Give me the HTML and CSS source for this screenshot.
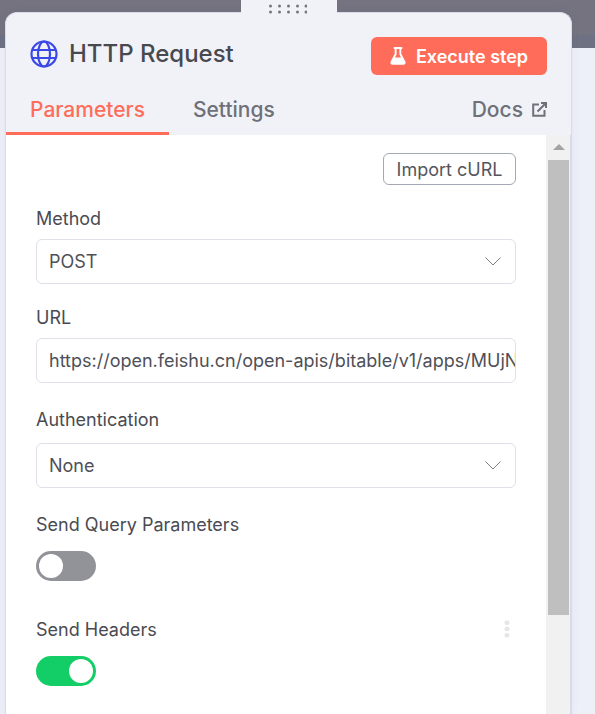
FILE: index.html
```html
<!DOCTYPE html>
<html lang="en">
<head>
    <meta charset="UTF-8">
    <meta name="viewport" content="width=device-width, initial-scale=1.0">
    <title>HTTP Request</title>
    <link rel="stylesheet" href="styles.css">
</head>
<body>
    <div class="wrapper">
        <div class="drag-handle">
            <svg width="38" height="10" viewBox="0 0 38 10" fill="#74757f">
                <circle cx="1.5" cy="2" r="1.5"/><circle cx="10.5" cy="2" r="1.5"/><circle cx="19.5" cy="2" r="1.5"/><circle cx="28.5" cy="2" r="1.5"/><circle cx="37" cy="2" r="1.5"/>
                <circle cx="1.5" cy="8" r="1.5"/><circle cx="10.5" cy="8" r="1.5"/><circle cx="19.5" cy="8" r="1.5"/><circle cx="28.5" cy="8" r="1.5"/><circle cx="37" cy="8" r="1.5"/>
            </svg>
        </div>
        <div class="panel">
            <div class="panel-header">
                <div class="node-title">
                    <svg class="globe" width="28" height="28" viewBox="0 0 28 28" fill="none" stroke="#3a48e6" stroke-width="2.2">
                        <circle cx="14" cy="14" r="12.5"/>
                        <ellipse cx="14" cy="14" rx="6" ry="12.5"/>
                        <path d="M2.5 10h23M2.5 18h23"/>
                    </svg>
                    <span>HTTP Request</span>
                </div>
                <button class="execute-btn">
                    <svg width="16" height="18" viewBox="0 0 17 19" fill="#fff">
                        <path d="M4 0h9v2h-1v5.2l4.4 8.3c.7 1.5-.3 3.2-2 3.2H2.6c-1.7 0-2.7-1.7-2-3.2L5 7.2V2H4zM7 2v5.7L5.4 11h6.2L10 7.7V2z"/>
                    </svg>
                    Execute step
                </button>
            </div>
            <div class="tab-container">
                <p class="tab current-tab">Parameters</p>
                <p class="tab">Settings</p>
                <a class="docs-link">
                    Docs
                    <svg width="15" height="15" viewBox="0 0 15 15" fill="none" stroke="#6f7078" stroke-width="2">
                        <path d="M7 2.5H1.2v11.3h11.3V8M5.5 9.5L14 1M9 1h5v5"/>
                    </svg>
                </a>
            </div>
            <div class="panel-main">
                <div class="settings">
                    <div class="import-row">
                        <button class="import-btn">Import cURL</button>
                    </div>

                    <div class="field field-method">
                        <label>Method</label>
                        <div class="input-box">
                            <span>POST</span>
                            <svg class="chevron" width="16" height="9" viewBox="0 0 16 9" fill="none" stroke="#7c7d85" stroke-width="1"><path d="M.5.5L8 8l7.5-7.5"/></svg>
                        </div>
                    </div>

                    <div class="field field-url">
                        <label>URL</label>
                        <div class="input-box">
                            <span class="url-text">https://open.feishu.cn/open-apis/bitable/v1/apps/MUjN</span>
                        </div>
                    </div>

                    <div class="field field-auth">
                        <label>Authentication</label>
                        <div class="input-box">
                            <span>None</span>
                            <svg class="chevron" width="16" height="9" viewBox="0 0 16 9" fill="none" stroke="#7c7d85" stroke-width="1"><path d="M.5.5L8 8l7.5-7.5"/></svg>
                        </div>
                    </div>

                    <div class="field field-query">
                        <label>Send Query Parameters</label>
                        <div class="switch"><span class="knob"></span></div>
                    </div>

                    <div class="field field-headers">
                        <div class="label-row">
                            <label>Send Headers</label>
                            <svg width="6" height="18" viewBox="0 0 6 18" fill="#e6e6e8">
                                <rect x="0.5" y="0.5" width="5" height="4.5" rx="2"/><rect x="0.5" y="6.8" width="5" height="4.5" rx="2"/><rect x="0.5" y="13" width="5" height="4.5" rx="2"/>
                            </svg>
                        </div>
                        <div class="switch switch-on"><span class="knob"></span></div>
                    </div>
                </div>
                <div class="scrollbar">
                    <span class="scroll-arrow"></span>
                    <div class="scroll-thumb"></div>
                </div>
            </div>
        </div>
    </div>
</body>
</html>
```

FILE: styles.css
```css
body {
    margin: 0;
    height: 714px;
    overflow: hidden;
    font-family: Inter, "Liberation Sans", sans-serif;
    color: #4a4b52;
    background: linear-gradient(to bottom, #75737f 35px, #6e7182 35px, #6e7182 48px, #eef0f8 48px);
}
p {
    margin: 0;
}
.wrapper {
    display: flex;
    flex-direction: column;
    align-items: center;
    width: 567px;
    margin-left: 5px;
}
.drag-handle {
    position: relative;
    z-index: 1;
    width: 96px;
    height: 13px;
    margin: 0 0 -1px 1px;
    padding: 4px 0 0 28px;
    background: #f0f2f8;
    display: flex;
    align-items: flex-start;
    box-sizing: border-box;
}
.panel {
    width: 100%;
    height: 702px;
    background: #f0f2f8;
    border: 1px solid #d9dbe6;
    border-bottom: none;
    border-radius: 12px 12px 0 0;
    box-sizing: border-box;
    box-shadow: 0 0 10px rgba(60, 70, 160, 0.07);
    display: flex;
    flex-direction: column;
}
.panel-header {
    display: flex;
    justify-content: space-between;
    align-items: flex-start;
    padding: 24px 24px 0 24px;
}
.node-title {
    display: flex;
    align-items: center;
    gap: 11px;
    margin-top: 3px;
    font-size: 24px;
    font-weight: 500;
    line-height: 28px;
    color: #48494f;
}
.execute-btn {
    display: flex;
    align-items: center;
    gap: 10px;
    height: 38px;
    width: 176px;
    justify-content: center;
    border: none;
    border-radius: 6px;
    background: #ff6d5a;
    color: white;
    font-family: inherit;
    font-size: 18px;
    font-weight: 600;
}
.tab-container {
    display: flex;
    align-items: flex-start;
    height: 51px;
    margin-top: 9px;
    box-sizing: border-box;
    font-size: 21px;
    font-weight: 500;
    color: #6f7078;
}
.tab {
    padding: 13px 24px 0;
    height: 51px;
    box-sizing: border-box;
}
.current-tab {
    color: #ff6d5a;
    border-bottom: 3px solid #ff6d5a;
}
.docs-link {
    margin-left: auto;
    display: flex;
    align-items: center;
    gap: 9px;
    padding: 13px 24px 0 0;
}
.panel-main {
    flex: 1;
    display: flex;
    background: white;
    min-height: 0;
}
.settings {
    flex: 1;
    min-width: 0;
    padding: 18px 30px 0;
    font-size: 18px;
}
.import-row {
    display: flex;
    justify-content: flex-end;
}
.import-btn {
    width: 133px;
    height: 32px;
    padding: 0;
    background: white;
    border: 1px solid #a4a7b5;
    border-radius: 6px;
    font-family: inherit;
    font-size: 18px;
    color: #55565d;
}
.field label {
    display: block;
    line-height: 20px;
}
.field-method {
    margin-top: 24px;
}
.field-url {
    margin-top: 24px;
}
.field-auth {
    margin-top: 27px;
}
.field-query {
    margin-top: 27px;
}
.field-headers {
    margin-top: 39px;
}
.input-box {
    display: flex;
    justify-content: space-between;
    align-items: center;
    height: 45px;
    margin-top: 10px;
    padding: 0 14px 0 12px;
    box-sizing: border-box;
    background: white;
    border: 1px solid #dfe1ea;
    border-radius: 6px;
    overflow: hidden;
    font-size: 18px;
    color: #4f5057;
}
.field-auth .input-box {
    margin-top: 13px;
}
.field-url .input-box {
    padding-right: 0;
}
.url-text {
    white-space: nowrap;
}
.switch {
    width: 60px;
    height: 30px;
    margin-top: 16px;
    padding: 3px;
    box-sizing: border-box;
    background: #929399;
    border-radius: 15px;
    display: flex;
}
.knob {
    width: 24px;
    height: 24px;
    background: white;
    border-radius: 50%;
}
.switch-on {
    background: #13ce66;
    justify-content: flex-end;
}
.label-row {
    display: flex;
    justify-content: space-between;
    align-items: flex-start;
    padding-right: 6px;
}
.scrollbar {
    width: 25px;
    background: #f1f1f1;
    border-right: 1px solid #d9dbe6;
    box-sizing: border-box;
    padding: 0 1px 0 2px;
    flex-shrink: 0;
    display: flex;
    flex-direction: column;
    align-items: center;
}
.scroll-arrow {
    width: 0;
    height: 0;
    margin-top: 9px;
    border-left: 6px solid transparent;
    border-right: 6px solid transparent;
    border-bottom: 6px solid #a3a3a3;
}
.scroll-thumb {
    width: 21px;
    height: 455px;
    margin-top: 10px;
    background: #bfbfbf;
}
```
